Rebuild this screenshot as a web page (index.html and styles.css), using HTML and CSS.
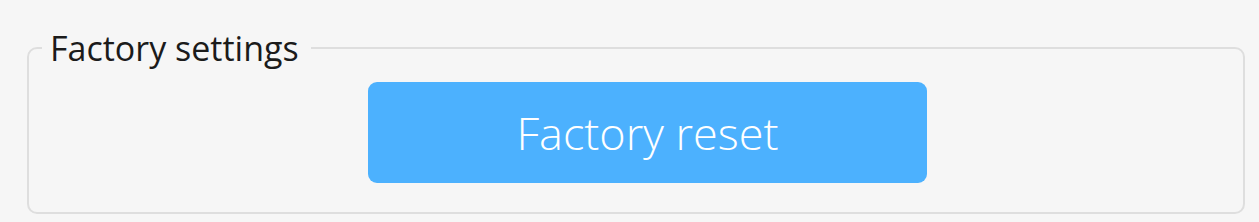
FILE: index.html
```html
<!DOCTYPE html>
<html lang="en">
<head>
    <meta charset="UTF-8">
    <title>Factory settings</title>
    <link rel="stylesheet" href="styles.css">
</head>
<body>

<fieldset class="settings-group">
    <legend>Factory settings</legend>
    <button class="reset-button" type="button">Factory reset</button>
</fieldset>

</body>
</html>
```

FILE: styles.css
```css
body {
    margin: 0;
    padding: 29px 14px 0 27px;
    background-color: #f6f6f6;
    font-family: "Open Sans", "Noto Sans", sans-serif;
}
.settings-group {
    margin: 0;
    padding: 15px 0 29px 0;
    border: 2px solid #dedede;
    border-radius: 10px;
}
.settings-group legend {
    margin-left: 13px;
    padding: 0 12px 0 8px;
    font-size: 34px;
    line-height: 38px;
    color: #1b1b1b;
}
.reset-button {
    display: block;
    margin-left: 339px;
    width: 559px;
    height: 101px;
    padding: 0;
    border: none;
    border-radius: 9px;
    background-color: #4cb1fe;
    color: white;
    font-family: "Open Sans", "Noto Sans", sans-serif;
    font-size: 45px;
    font-weight: 300;
    cursor: pointer;
}
.reset-button:hover {
    background-color: #3aa6f8;
}
```
